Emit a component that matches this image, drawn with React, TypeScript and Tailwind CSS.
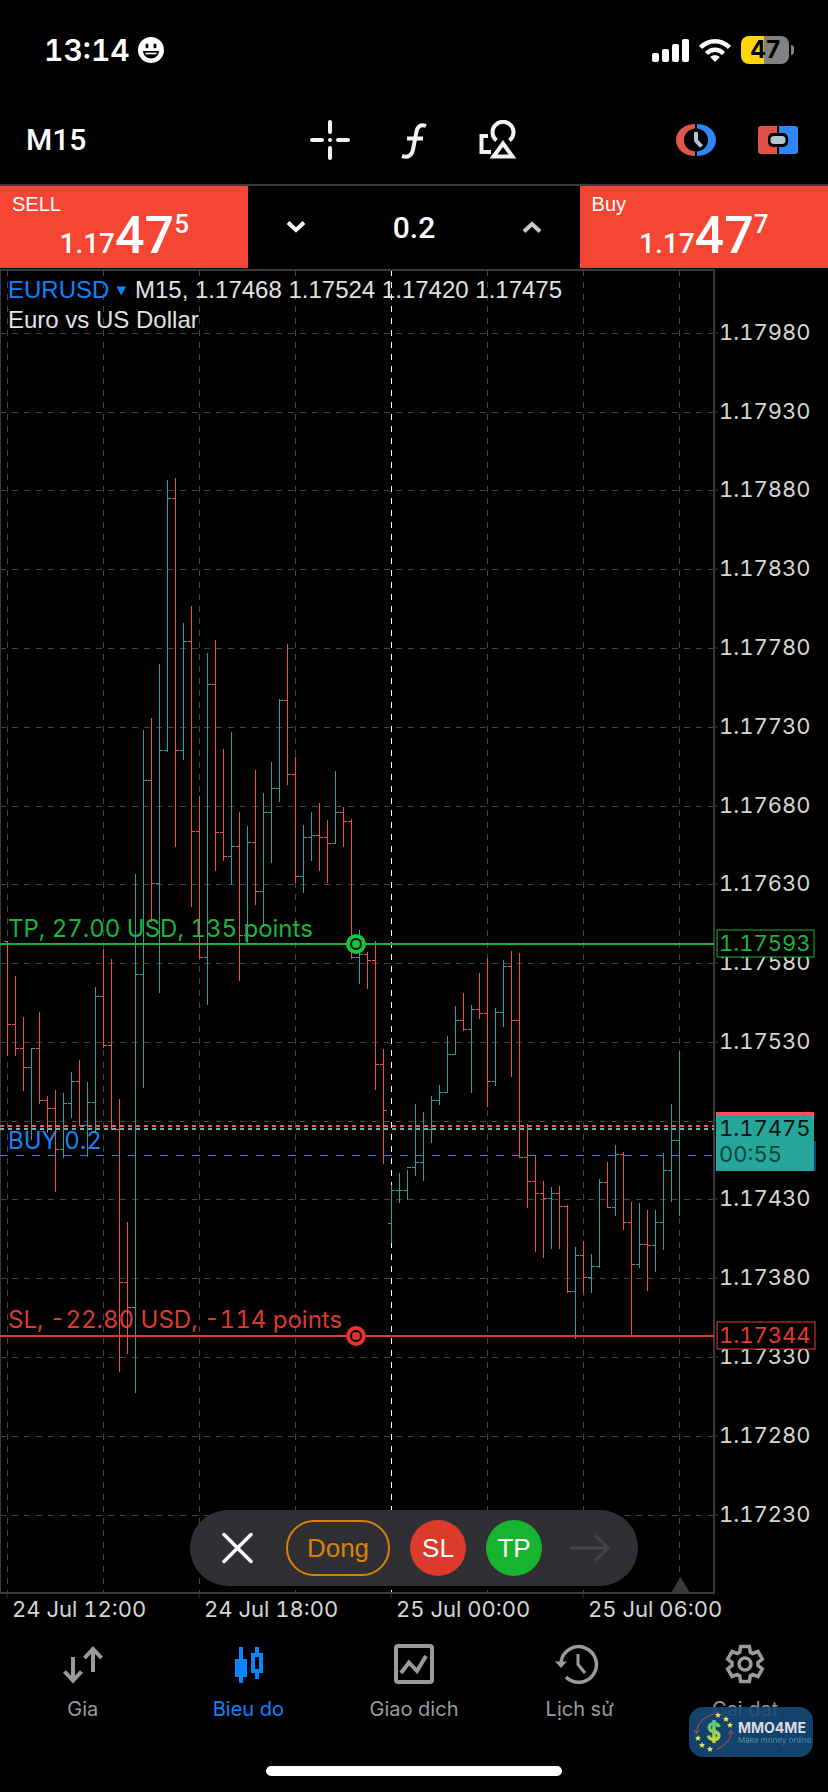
import { useState } from "react";
import type { ReactNode } from "react";

type Bar = [high: number, low: number, close: number, up: 0 | 1];

// y values are in chart space, bars are spaced 8 units apart
const BARS: Bar[] = [
  [941, 1056, 1024, 0], [976, 1056, 1048, 0], [1017, 1091, 1067, 0], [1049, 1140, 1048, 1],
  [1012, 1104, 1100, 0], [1096, 1133, 1108, 0], [1090, 1192, 1149, 0], [1093, 1158, 1103, 1],
  [1072, 1118, 1081, 1], [1060, 1125, 1125, 0], [1082, 1157, 1102, 1], [987, 1133, 996, 1],
  [949, 1048, 1045, 0], [959, 1129, 1129, 0], [1099, 1372, 1282, 0], [1222, 1354, 1307, 0],
  [874, 1393, 974, 1], [730, 1088, 780, 1], [718, 922, 883, 0], [664, 993, 750, 1],
  [480, 752, 498, 1], [478, 847, 750, 0], [623, 760, 641, 1], [606, 907, 831, 0],
  [796, 959, 957, 0], [653, 1005, 684, 1], [640, 871, 832, 0], [749, 861, 856, 0],
  [732, 885, 846, 1], [812, 981, 935, 0], [826, 943, 842, 1], [770, 905, 891, 0],
  [793, 927, 812, 1], [762, 863, 788, 1], [699, 802, 700, 1], [644, 785, 774, 0],
  [757, 883, 876, 0], [825, 893, 837, 1], [812, 861, 835, 1], [803, 871, 837, 0],
  [820, 883, 843, 0], [771, 844, 812, 1], [807, 847, 821, 0], [819, 959, 957, 0],
  [930, 984, 954, 1], [952, 989, 960, 0], [941, 1090, 1064, 0], [1049, 1164, 1110, 0],
  [1185, 1243, 1190, 1], [1173, 1203, 1190, 1], [1170, 1200, 1167, 1], [1104, 1176, 1162, 1],
  [1112, 1181, 1129, 1], [1096, 1143, 1100, 1], [1085, 1105, 1092, 1], [1036, 1093, 1054, 1],
  [1006, 1055, 1020, 1], [993, 1031, 1029, 0], [1005, 1093, 1009, 1], [973, 1019, 1013, 0],
  [958, 1107, 1081, 0], [1008, 1086, 1012, 1], [960, 1027, 966, 1], [951, 1077, 1020, 0],
  [953, 1157, 1157, 0], [1124, 1208, 1181, 0], [1156, 1252, 1193, 0], [1181, 1258, 1198, 0],
  [1187, 1249, 1193, 1], [1186, 1249, 1206, 0], [1205, 1293, 1291, 0], [1247, 1339, 1255, 1],
  [1241, 1293, 1277, 0], [1254, 1293, 1266, 1], [1179, 1268, 1182, 1], [1162, 1208, 1207, 0],
  [1145, 1216, 1154, 1], [1152, 1230, 1222, 0], [1202, 1335, 1264, 0], [1203, 1268, 1244, 1],
  [1210, 1291, 1245, 0], [1210, 1272, 1222, 1], [1153, 1250, 1170, 1], [1104, 1202, 1140, 1],
  [1051, 1216, 1129, 1],
];

const PRICES = [
  { label: "1.17980", y: 333 },
  { label: "1.17930", y: 412 },
  { label: "1.17880", y: 490 },
  { label: "1.17830", y: 569 },
  { label: "1.17780", y: 648 },
  { label: "1.17730", y: 727 },
  { label: "1.17680", y: 806 },
  { label: "1.17630", y: 884 },
  { label: "1.17580", y: 963 },
  { label: "1.17530", y: 1042 },
  { label: "", y: 1121 },
  { label: "1.17430", y: 1199 },
  { label: "1.17380", y: 1278 },
  { label: "1.17330", y: 1357 },
  { label: "1.17280", y: 1436 },
  { label: "1.17230", y: 1515 },
];

const TIMES = [
  { label: "24 Jul 12:00", x: 7 },
  { label: "24 Jul 18:00", x: 199 },
  { label: "25 Jul 00:00", x: 391 },
  { label: "25 Jul 06:00", x: 583 },
];

const GRID_X = [7, 103, 199, 295, 487, 583, 679];

const RED = "#ef5350";
const TEAL = "#26a69a";

const barX = (i: number) => 7 + i * 8;

const gearPoints = Array.from({ length: 6 }, (_, i) => {
  const mid = i * 60 - 90;
  return [[-24, 13], [-14, 18], [14, 18], [24, 13]]
    .map(([offset, r]) => {
      const a = ((mid + offset) * Math.PI) / 180;
      return `${20 + r * Math.cos(a)},${20 + r * Math.sin(a)}`;
    })
    .join(" ");
}).join(" ");

const StatusBar = () => (
  <div className="flex h-[100px] items-center justify-between pl-11 pr-[34px]">
    <div className="flex items-center gap-2">
      <span className="text-[30px] font-semibold leading-none tabular-nums">13:14</span>
      <svg viewBox="0 0 26 26" className="size-[26px]">
        <circle cx="13" cy="13" r="13" fill="#fff" />
        <ellipse cx="9" cy="9" rx="1.6" ry="2.4" />
        <ellipse cx="17" cy="9" rx="1.6" ry="2.4" />
        <path d="M5 14h16c0 4-3.500 7.500-8 7.500S5 18 5 14z" />
        <path d="M7.500 16.500h11" stroke="#fff" strokeWidth="1.600" />
      </svg>
    </div>
    <div className="flex items-center gap-[10px]">
      <svg viewBox="0 0 37 24" className="h-6 w-[37px]" fill="#fff">
        <rect x="0" y="15" width="7" height="9" rx="2" />
        <rect x="10" y="11" width="7" height="13" rx="2" />
        <rect x="20" y="6" width="7" height="18" rx="2" />
        <rect x="30" y="1" width="7" height="23" rx="2" />
      </svg>
      <svg viewBox="0 0 32 24" className="h-6 w-8" fill="none" stroke="#fff" strokeWidth="4.500">
        <path d="M1.500 9.500C9.500 1 22.500 1 30.500 9.500" />
        <path d="M7.500 15.500c5-5 12-5 17 0" />
        <path d="M16 24l-4.800-5c2.700-2.400 6.900-2.400 9.600 0z" fill="#fff" stroke="none" />
      </svg>
      <div className="flex items-center gap-[2px]">
        <div className="flex h-7 w-12 items-center justify-center rounded-lg bg-linear-to-r from-[#ffd60a] from-48% to-[#828282] to-48% text-2xl font-bold leading-none text-black">
          47
        </div>
        <div className="h-[10px] w-[3px] rounded-r-full bg-[#828282]" />
      </div>
    </div>
  </div>
);

const Toolbar = () => (
  <div className="grid h-[84px] grid-cols-3 items-center pb-1">
    <button className="justify-self-start pl-[26px] font-[Roboto,sans-serif] text-[30px] font-medium leading-none">
      M15
    </button>
    <div className="flex justify-center gap-11">
      <button aria-label="Crosshair">
        <svg viewBox="0 0 40 40" className="size-10" stroke="#f2f2f2" strokeWidth="4" strokeLinecap="round">
          <path d="M20 2v10M20 28v10M2 20h10M28 20h10M20 20h0" />
        </svg>
      </button>
      <button aria-label="Indicators">
        <svg viewBox="0 0 40 40" className="size-10" fill="none" stroke="#f2f2f2" strokeWidth="4">
          <path d="M32 6c-5-2-8.500 0-9.500 5.500L19 29.500C18 35.500 14 38 8 36" />
          <path d="M13 18.500h16" />
        </svg>
      </button>
      <button aria-label="Objects">
        <svg viewBox="0 0 40 40" className="size-10" fill="none" stroke="#f2f2f2" strokeWidth="4">
          <path d="M10 16H3.500v16H13" />
          <path d="M18.500 20.500a10.500 10.500 0 1 1 13 0" />
          <path d="M25 23.500l-9.500 13h19z" />
        </svg>
      </button>
    </div>
    <div className="flex justify-end gap-[42px] pr-[30px]">
      <button aria-label="Trade session">
        <svg viewBox="0 0 40 40" className="size-10" fill="none">
          <path d="M19 4C8 4 0 11 0 20s8 16 19 16v-4.500C12.500 31 8 26 8 20S12.500 9 19 8.500z" fill="#e2574c" />
          <path d="M21 4c11 0 19 7 19 16s-8 16-19 16v-4.500C27.500 31 32 26 32 20S27.500 9 21 8.500z" fill="#2f86f6" />
          <path d="M20 12v8.500l5.500 6" stroke="#b4c6cd" strokeWidth="4" />
        </svg>
      </button>
      <button aria-label="One click trading">
        <svg viewBox="0 0 40 40" className="size-10">
          <path d="M3 6h16v28H3a3 3 0 0 1-3-3V9a3 3 0 0 1 3-3z" fill="#dd5246" />
          <path d="M21 6h16a3 3 0 0 1 3 3v22a3 3 0 0 1-3 3H21z" fill="#2f86f6" />
          <rect x="10" y="13" width="20" height="14" rx="5" fill="#000" />
          <rect x="12.500" y="16" width="15" height="8" rx="3.500" fill="#b4c6cd" />
        </svg>
      </button>
    </div>
  </div>
);

const QuoteButton = ({ side, pip }: { side: string; pip: string }) => (
  <button className="col-span-3 flex h-[82px] flex-col bg-[#f44632] pt-[6px] text-left">
    <span className="px-3 font-['Liberation_Sans',sans-serif] text-[20px] leading-6">{side}</span>
    <span className="flex items-baseline self-center font-[Roboto,sans-serif] font-medium">
      <span className="text-[28px] leading-10">1.17</span>
      <span className="text-[52px] leading-10">47</span>
      <span className="self-start text-[26px] leading-4">{pip}</span>
    </span>
  </button>
);

const TradeRow = () => {
  const [volume, setVolume] = useState("0.2");
  const step = (d: number) => setVolume((v) => Math.max(0.1, Number(v) + d).toFixed(1));

  return (
    <div className="grid grid-cols-10 border-t-2 border-[#3a3d3f]">
      <QuoteButton side="SELL" pip="5" />
      <div className="col-span-4 flex items-center">
        <button aria-label="Decrease volume" className="flex w-24 justify-center" onClick={() => step(-0.1)}>
          <svg viewBox="0 0 20 12" className="h-3 w-5" fill="none" stroke="#f2f2f2" strokeWidth="4">
            <path d="M2 1.500l8 7.500 8-7.500" />
          </svg>
        </button>
        <input
          aria-label="Volume"
          className="h-full min-w-0 flex-1 bg-transparent text-center font-[Roboto,sans-serif] text-[30px] font-medium outline-none"
          value={volume}
          onChange={(e) => setVolume(e.target.value)}
        />
        <button aria-label="Increase volume" className="flex w-24 justify-center" onClick={() => step(0.1)}>
          <svg viewBox="0 0 20 12" className="h-3 w-5" fill="none" stroke="#c8c8c8" strokeWidth="4">
            <path d="M2 10.500L10 3l8 7.500" />
          </svg>
        </button>
      </div>
      <QuoteButton side="Buy" pip="7" />
    </div>
  );
};

const LevelHandle = ({ y, color }: { y: number; color: string }) => (
  <g>
    <circle cx="356" cy={y} r="8" fill="#000" stroke={color} strokeWidth="4" />
    <circle cx="356" cy={y} r="4" fill={color} />
  </g>
);

const Chart = () => (
  <svg viewBox="0 268 828 1364" className="block w-full text-[22px] tabular-nums" fontFamily="Inter, sans-serif">
    {/* grid */}
    <g stroke="#444" strokeDasharray="6 6" shapeRendering="crispEdges">
      {PRICES.map((p) => (
        <line key={p.y} x1="0" x2="714" y1={p.y} y2={p.y} />
      ))}
      {GRID_X.map((x) => (
        <line key={x} x1={x} x2={x} y1="270" y2="1593" />
      ))}
      <line x1="391" x2="391" y1="270" y2="1593" stroke="#fff" />
    </g>
    <path d="M671 1593l9.500-16 9.500 16z" fill="#3a3a3a" />
    <g stroke="#3a3a3a" strokeWidth="2">
      <path d="M0 270H714V1593H0" fill="none" />
      <line x1="0" x2="0" y1="270" y2="1593" />
      {PRICES.map((p) => (
        <line key={p.y} x1="714" x2="718" y1={p.y} y2={p.y} strokeWidth="1" />
      ))}
      {TIMES.map((t) => (
        <line key={t.x} x1={t.x} x2={t.x} y1="1593" y2="1598" strokeWidth="1" />
      ))}
    </g>

    {/* order labels */}
    <g className="text-[24px]">
      <text x="8" y="937" fill="#19b53c">TP, 27.00 USD, 135 points</text>
      <text x="8" y="1149" fill="#1a82f0">BUY 0.2</text>
      <text x="8" y="1328" fill="#dd3a2e">SL, -22.80 USD, -114 points</text>
    </g>

    {/* bars */}
    <g shapeRendering="crispEdges">
      {BARS.map(([high, low, close, up], i) => {
        const x = barX(i);
        const open = i === 48 ? 1223 : i > 0 ? BARS[i - 1][2] : 941;
        return (
          <path
            key={i}
            d={`M${x} ${high}V${low}M${x - 3} ${open}H${x}M${x} ${close}H${x + 4}`}
            stroke={up ? TEAL : RED}
            fill="none"
          />
        );
      })}
    </g>

    {/* bid, ask and order lines */}
    <g strokeWidth="2" shapeRendering="crispEdges">
      <line x1="0" x2="714" y1="1126" y2="1126" stroke="#ff5266" strokeDasharray="4 4" />
      <line x1="0" x2="714" y1="1129" y2="1129" stroke="#5fb8ae" strokeDasharray="4 4" />
      <line x1="0" x2="714" y1="1155" y2="1155" stroke="#1a82f0" strokeWidth="1" strokeDasharray="8 8" />
      <line x1="0" x2="714" y1="944" y2="944" stroke="#19b53c" />
      <line x1="0" x2="714" y1="1336" y2="1336" stroke="#e53935" />
    </g>
    <LevelHandle y={944} color="#10c838" />
    <LevelHandle y={1336} color="#e8352b" />

    {/* price scale */}
    <g fill="#d6d6d6">
      {PRICES.map((p) => (
        <text key={p.y} x="719" y={p.y + 7}>{p.label}</text>
      ))}
    </g>
    <rect x="717" y="930" width="97" height="27" fill="#000" stroke="#19b53c" />
    <text x="719" y="951" fill="#19b53c">1.17593</text>
    <rect x="717" y="1322" width="98" height="27" fill="#000" stroke="#e53935" />
    <text x="719" y="1343" fill="#e53935">1.17344</text>
    <rect x="717" y="1142" width="98" height="28" fill="#000" stroke="#1a82f0" />
    <rect x="716" y="1112" width="98" height="59" fill={TEAL} />
    <rect x="716" y="1112" width="98" height="3" fill="#ff5252" />
    <text x="719" y="1136" fill="#04120f">1.17475</text>
    <text x="719" y="1162" fill="#0b4540">00:55</text>

    {/* time scale */}
    <g fill="#d6d6d6">
      {TIMES.map((t) => (
        <text key={t.x} x={t.x + 5} y="1617">{t.label}</text>
      ))}
    </g>

    {/* symbol */}
    <g className="text-[24px]" fontFamily="'Liberation Sans', sans-serif" fill="#e2e2e2">
      <text x="8" y="298" fill="#0a84ff">EURUSD</text>
      <path d="M116.500 286.500h9.500l-4.750 9z" fill="#0a84ff" />
      <text x="135" y="298">M15, 1.17468 1.17524 1.17420 1.17475</text>
      <text x="8" y="328">Euro vs US Dollar</text>
    </g>
  </svg>
);

const OrderPill = () => (
  <div className="absolute inset-x-0 bottom-[46px] flex justify-center font-['Liberation_Sans',sans-serif] text-[26px]">
    <div className="flex items-center gap-5 rounded-full bg-[#302f34] px-5 py-[10px]">
      <button aria-label="Close panel" className="flex size-14 items-center justify-center">
        <svg viewBox="0 0 32 32" className="size-8" stroke="#fff" strokeWidth="3.500" strokeLinecap="round">
          <path d="M2 2.500l27 27M29 2.500l-27 27" />
        </svg>
      </button>
      <button className="h-14 w-[104px] rounded-full border-2 border-[#d98206] text-[#d98206]">Dong</button>
      <button className="size-14 rounded-full bg-[#dc3a2a]">SL</button>
      <button className="size-14 rounded-full bg-[#17b52f]">TP</button>
      <button aria-label="Next" className="flex size-14 items-center justify-center">
        <svg viewBox="0 0 40 28" className="h-7 w-10" fill="none" stroke="#454449" strokeWidth="3">
          <path d="M0 14h38M25 1.500L38 14 25 26.500" />
        </svg>
      </button>
    </div>
  </div>
);

const NavItem = ({ label, active, children }: { label: string; active?: boolean; children: ReactNode }) => (
  <a
    href="#"
    aria-current={active ? "page" : undefined}
    className={`flex flex-col items-center gap-[13px] ${active ? "text-[#0a84ff]" : "text-[#9b9b9b]"}`}
  >
    <svg viewBox="0 0 40 40" className="size-10 overflow-visible" fill="none" stroke="currentColor" strokeWidth="4">
      {children}
    </svg>
    <span className="text-[20px] leading-6">{label}</span>
  </a>
);

const BottomNav = () => (
  <nav className="grid grid-cols-5 pt-3">
    <NavItem label="Gia">
      <path d="M10 13v24M1.500 27.500l8.500 9 8.500-9M30 28V5M21.500 14l8.500-9 8.500 9" />
    </NavItem>
    <NavItem label="Bieu do" active>
      <path d="M7 15h12v18H7zM11 3h4v36h-4zM27 3h4v7h-4zM27 28h4v7h-4z" fill="currentColor" stroke="none" />
      <rect x="25" y="11" width="8" height="16" />
    </NavItem>
    <NavItem label="Giao dich">
      <rect x="2" y="2" width="36" height="36" rx="2" />
      <path d="M7 29l8-10.500 8 8.500 9-15" />
    </NavItem>
    <NavItem label="Lịch sử">
      <path d="M1 18A17.800 17.800 0 1 1 6 33" strokeWidth="3.500" />
      <path d="M-5 17.500H7L1 24z" fill="currentColor" stroke="none" />
      <path d="M18 10v10.500l7 8.500" strokeWidth="3" />
    </NavItem>
    <NavItem label="Cai dat">
      <polygon points={gearPoints} strokeWidth="3.500" />
      <circle cx="20" cy="20" r="6" strokeWidth="3.500" />
    </NavItem>
  </nav>
);

const STAR = "M0-3l.9 2 2.100.2-1.600 1.500.5 2.100L0 1.700l-1.900 1.100.5-2.100L-3-.8l2.100-.2z";
const STARS = [[24, 4], [32, 8], [36, 14], [4, 27], [8, 34], [16, 38]];

const Watermark = () => (
  <div className="absolute right-[15px] top-[75px] flex h-[50px] w-[124px] items-center gap-1 rounded-[14px] bg-[#154a75]/90 pl-[5px]">
    <svg viewBox="0 0 40 42" className="h-[42px] w-10 shrink-0" fill="none">
      <defs>
        <linearGradient id="cash" x1="0" y1="0" x2="0" y2="1">
          <stop offset="0" stopColor="#4cc38a" />
          <stop offset="1" stopColor="#d4d82c" />
        </linearGradient>
      </defs>
      <path d="M20 3C10 6 3 12 2.500 22M0 19l2.500 3.500 3-3" stroke="#c9485b" />
      <path d="M23 38C32 34 37 29 37 20M34 23l3-3.500 2.500 3.500" stroke="#c9485b" />
      <path
        d="M25 16c-1-3-3-3.500-5-3.500-6 0-6.500 7 0 8 7 1.200 6 8-.5 8-3 0-4.500-1.500-5-4M20 9v23"
        stroke="url(#cash)"
        strokeWidth="3.500"
      />
      {STARS.map(([x, y]) => (
        <path key={x} d={STAR} transform={`translate(${x} ${y})`} fill="#f0e05a" />
      ))}
    </svg>
    <div className="flex flex-col whitespace-nowrap">
      <span className="text-[14px] font-bold leading-4 text-[#dcdde2]">MMO4ME</span>
      <span className="bg-linear-to-r from-[#4fa08a] to-[#4a86c8] bg-clip-text text-[8px] leading-[9px] text-transparent">
        Make money online
      </span>
    </div>
  </div>
);

export default function App() {
  return (
    <div className="min-h-screen bg-black font-[Inter,sans-serif] text-white">
      <StatusBar />
      <Toolbar />
      <TradeRow />
      <main className="relative">
        <Chart />
        <OrderPill />
      </main>
      <footer className="relative">
        <BottomNav />
        <Watermark />
        <div className="mx-auto mt-[45px] h-[10px] w-[296px] rounded-full bg-white" />
      </footer>
    </div>
  );
}
